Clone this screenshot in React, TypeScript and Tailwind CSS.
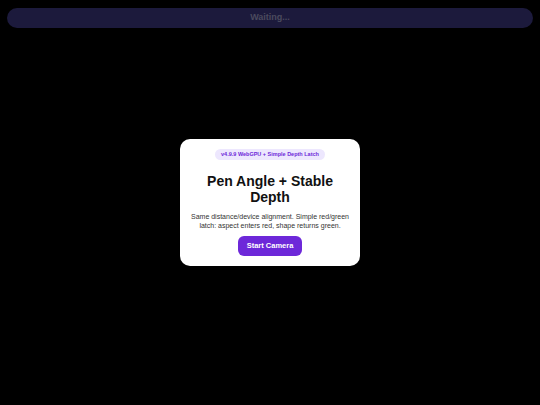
export default function App() {
  return (
    <div className="relative h-[405px] w-[540px] overflow-hidden bg-black font-['Liberation_Sans',Arial,sans-serif]">
      {/* status bar floats over the page */}
      <div className="absolute left-[7px] right-[7px] top-[8px] flex h-[20px] items-center justify-center rounded-full bg-[#1c1a3c] text-[9px] font-bold text-[#4b4a5e]">
        Waiting...
      </div>

      <div className="flex h-full items-center justify-center">
        <div className="flex w-[180px] flex-col items-center rounded-[10px] bg-white px-[8px] pb-[10px] pt-[10px] text-center">
          <span className="rounded-full bg-[#ede7fe] px-[6px] py-[2px] text-[5.5px] font-bold leading-[7px] text-[#6d28d9]">
            v4.9.9 WebGPU + Simple Depth Latch
          </span>
          <h1 className="mt-[13px] text-[14px] font-bold leading-[16px] text-[#111]">
            Pen Angle + Stable Depth
          </h1>
          <p className="mt-[8px] text-[7px] leading-[8.5px] text-[#333]">
            Same distance/device alignment. Simple red/green latch: aspect enters red, shape returns green.
          </p>
          <button className="mt-[6px] h-[20px] w-[64px] rounded-[6px] bg-[#6d28d9] text-[7.5px] font-bold text-white">
            Start Camera
          </button>
        </div>
      </div>
    </div>
  );
}
